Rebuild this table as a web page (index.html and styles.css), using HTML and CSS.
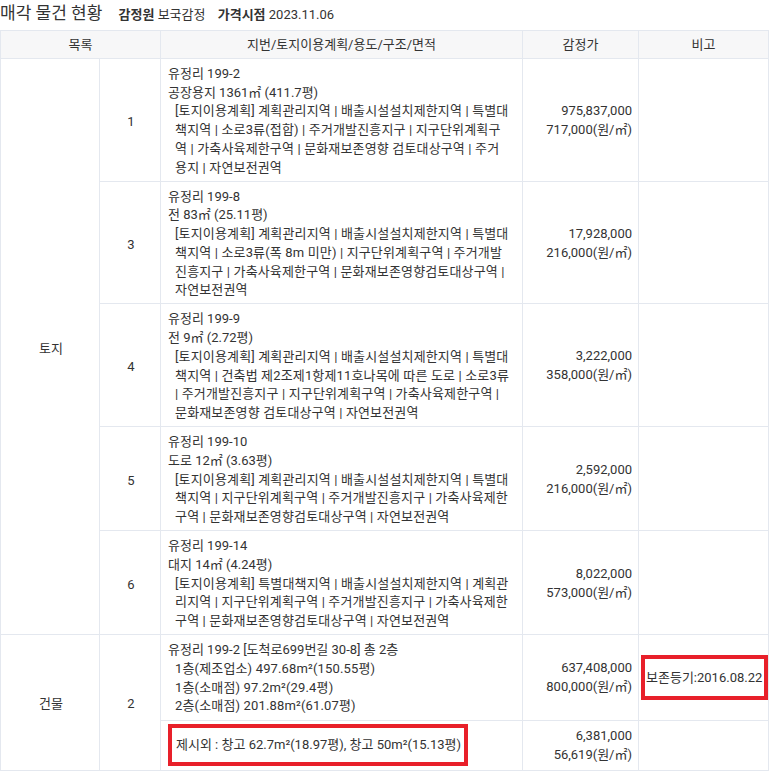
FILE: index.html
```html
<!DOCTYPE html>
<html lang="ko">
<head>
<meta charset="utf-8">
<title>매각 물건 현황</title>
<link rel="stylesheet" href="styles.css">
</head>
<body>
<div class="title-bar">
  <span class="title">매각 물건 현황</span>
  <span class="meta"><b>감정원</b> 보국감정</span>
  <span class="meta"><b>가격시점</b> 2023.11.06</span>
</div>
<table class="goods">
  <colgroup>
    <col class="c-kind"><col class="c-no"><col class="c-desc"><col class="c-price"><col class="c-note">
  </colgroup>
  <thead>
    <tr><th colspan="2">목록</th><th>지번/토지이용계획/용도/구조/면적</th><th>감정가</th><th>비고</th></tr>
  </thead>
  <tbody>
    <tr>
      <td class="kind" rowspan="5">토지</td>
      <td class="no">1</td>
      <td class="desc">유정리 199-2<br>공장용지 1361㎡ (411.7평)<div class="plan">[토지이용계획] 계획관리지역 | 배출시설설치제한지역 | 특별대<br>책지역 | 소로3류(접합) | 주거개발진흥지구 | 지구단위계획구<br>역 | 가축사육제한구역 | 문화재보존영향 검토대상구역 | 주거<br>용지 | 자연보전권역</div></td>
      <td class="price">975,837,000<br>717,000(원/㎡)</td>
      <td class="note"></td>
    </tr>
    <tr>
      <td class="no">3</td>
      <td class="desc">유정리 199-8<br>전 83㎡ (25.11평)<div class="plan">[토지이용계획] 계획관리지역 | 배출시설설치제한지역 | 특별대<br>책지역 | 소로3류(폭 8m 미만) | 지구단위계획구역 | 주거개발<br>진흥지구 | 가축사육제한구역 | 문화재보존영향검토대상구역 |<br>자연보전권역</div></td>
      <td class="price">17,928,000<br>216,000(원/㎡)</td>
      <td class="note"></td>
    </tr>
    <tr>
      <td class="no">4</td>
      <td class="desc">유정리 199-9<br>전 9㎡ (2.72평)<div class="plan">[토지이용계획] 계획관리지역 | 배출시설설치제한지역 | 특별대<br>책지역 | 건축법 제2조제1항제11호나목에 따른 도로 | 소로3류<br>| 주거개발진흥지구 | 지구단위계획구역 | 가축사육제한구역 |<br>문화재보존영향 검토대상구역 | 자연보전권역</div></td>
      <td class="price">3,222,000<br>358,000(원/㎡)</td>
      <td class="note"></td>
    </tr>
    <tr>
      <td class="no">5</td>
      <td class="desc">유정리 199-10<br>도로 12㎡ (3.63평)<div class="plan">[토지이용계획] 계획관리지역 | 배출시설설치제한지역 | 특별대<br>책지역 | 지구단위계획구역 | 주거개발진흥지구 | 가축사육제한<br>구역 | 문화재보존영향검토대상구역 | 자연보전권역</div></td>
      <td class="price">2,592,000<br>216,000(원/㎡)</td>
      <td class="note"></td>
    </tr>
    <tr>
      <td class="no">6</td>
      <td class="desc">유정리 199-14<br>대지 14㎡ (4.24평)<div class="plan">[토지이용계획] 특별대책지역 | 배출시설설치제한지역 | 계획관<br>리지역 | 지구단위계획구역 | 주거개발진흥지구 | 가축사육제한<br>구역 | 문화재보존영향검토대상구역 | 자연보전권역</div></td>
      <td class="price">8,022,000<br>573,000(원/㎡)</td>
      <td class="note"></td>
    </tr>
    <tr>
      <td class="kind" rowspan="2">건물</td>
      <td class="no" rowspan="2">2</td>
      <td class="desc">유정리 199-2 [도척로699번길 30-8] 총 2층<div class="plan">1층(제조업소) 497.68m²(150.55평)<br>1층(소매점) 97.2m²(29.4평)<br>2층(소매점) 201.88m²(61.07평)</div></td>
      <td class="price">637,408,000<br>800,000(원/㎡)</td>
      <td class="note note-mark"><span class="mark mark-note">보존등기:2016.08.22</span></td>
    </tr>
    <tr>
      <td class="desc desc-extra"><span class="mark mark-extra">제시외 : 창고 62.7m²(18.97평), 창고 50m²(15.13평)</span></td>
      <td class="price">6,381,000<br>56,619(원/㎡)</td>
      <td class="note"></td>
    </tr>
  </tbody>
</table>
</body>
</html>
```
FILE: styles.css
```css
html, body {
  margin: 0;
  padding: 0;
  background: #fff;
}
body {
  font-family: Roboto, "Noto Sans CJK KR", sans-serif;
  font-size: 13px;
  color: #333;
}
.title-bar {
  height: 26px;
  line-height: 26px;
  margin-bottom: 4px;
  white-space: nowrap;
}
.title {
  font-size: 17px;
  margin-right: 13px;
}
.meta {
  font-size: 13px;
  margin-right: 9px;
}
.meta b {
  font-weight: 700;
}
.goods {
  width: 769px;
  border-collapse: collapse;
  table-layout: fixed;
  line-height: 19px;
}
.c-kind { width: 99px; }
.c-no { width: 61px; }
.c-desc { width: 362px; }
.c-price { width: 116px; }
.c-note { width: 130px; }
.goods th, .goods td {
  border: 1px solid #e4e8ef;
}
.goods th {
  background: #f7f7f8;
  font-weight: 400;
  padding: 4px 5px;
  text-align: center;
}
.goods td {
  padding: 6px 5px 3px 7px;
  vertical-align: middle;
}
.kind, .no {
  text-align: center;
}
.goods td.desc {
  vertical-align: top;
  line-height: 18.7px;
  padding: 6px 5px 3.5px 7px;
}
.plan {
  margin-left: 7px;
  white-space: nowrap;
  letter-spacing: 0.15px;
}
.goods td.price {
  text-align: right;
  padding: 3px 6px 3px 5px;
}
.goods td.note-mark {
  padding: 3px 1px 3px 2px;
}
.goods td.desc-extra {
  padding: 3px 5px 4px 7px;
  line-height: 19px;
  vertical-align: middle;
}
.mark {
  display: inline-block;
  border: 4px solid #e8202a;
  white-space: nowrap;
}
.mark-extra {
  padding: 7px 3px 8px 4px;
}
.mark-note {
  padding: 9px 2px 9px 1px;
}
```
